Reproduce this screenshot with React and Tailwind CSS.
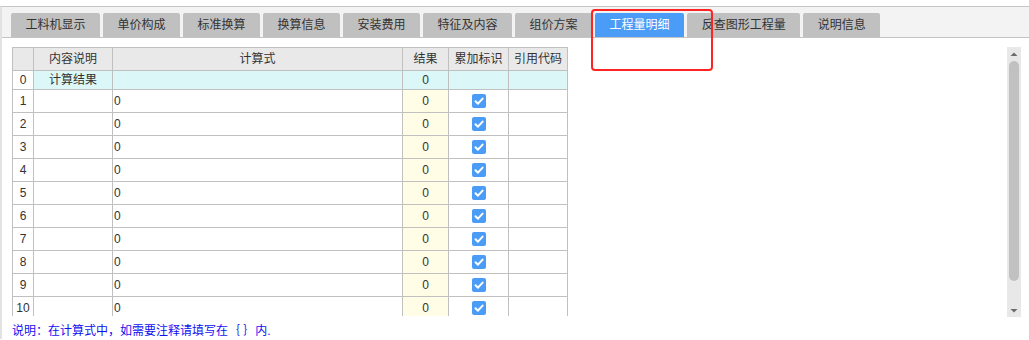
import React from "react"

const tabs = [
  "工料机显示",
  "单价构成",
  "标准换算",
  "换算信息",
  "安装费用",
  "特征及内容",
  "组价方案",
  "工程量明细",
  "反查图形工程量",
  "说明信息",
]
const activeTab = "工程量明细"

const rows = [1, 2, 3, 4, 5, 6, 7, 8, 9, 10]

function Check() {
  return (
    <span className="flex h-[14px] w-[14px] items-center justify-center rounded-[2px] bg-[#4a9cf6]">
      <svg width="14" height="14" viewBox="0 0 14 14">
        <path d="M3.5 7.2 L6 9.7 L10.6 4.6" fill="none" stroke="#fff" strokeWidth="2" strokeLinecap="round" strokeLinejoin="round" />
      </svg>
    </span>
  )
}

export default function App() {
  return (
    <div
      className="relative h-[340px] w-[1029px] overflow-hidden bg-white text-[12px] text-[#333]"
      style={{ fontFamily: '"Liberation Sans", "Noto Sans CJK SC", sans-serif' }}
    >
      <div className="h-[6px]" />
      <div className="border-t border-l-2 border-t-[#c6c6c6] border-l-[#e2e2e2]">
        {/* tab strip */}
        <div className="flex h-[31px] items-end gap-[3px] border-b border-[#c4c4c4] bg-[#f3f3f3] pl-[9px]">
          {tabs.map((t) => (
            <div
              key={t}
              className={
                t === activeTab
                  ? "flex h-[24px] items-center rounded-t-[2px] bg-[#4a9cf6] px-[14.5px] leading-none text-white"
                  : "flex h-[24px] items-center rounded-t-[2px] bg-[#c0c0c0] px-[14.5px] leading-none text-[#333]"
              }
            >
              {t}
            </div>
          ))}
        </div>

        {/* content */}
        <div className="flex items-start justify-between pt-[9px] pl-[10px] pr-[8px]">
          <div className="h-[269px] overflow-hidden border-t border-l border-[#c0c0c0]">
            {/* header */}
            <div className="flex h-[23px] bg-[#e9e9e9] leading-[22px]">
              <div className="w-[21px] border-r border-b border-[#c0c0c0]" />
              <div className="w-[79px] border-r border-b border-[#c0c0c0] text-center">内容说明</div>
              <div className="w-[290px] border-r border-b border-[#c0c0c0] text-center">计算式</div>
              <div className="w-[46px] border-r border-b border-[#c0c0c0] text-center">结果</div>
              <div className="w-[60px] border-r border-b border-[#c0c0c0] text-center">累加标识</div>
              <div className="w-[59px] border-r border-b border-[#c0c0c0] text-center">引用代码</div>
            </div>
            {/* row 0 */}
            <div className="flex h-[19px] leading-[18px]">
              <div className="w-[21px] border-r border-b border-[#c0c0c0] bg-white text-center">0</div>
              <div className="w-[79px] border-r border-b border-[#c0c0c0] bg-[#dbf7f7] text-center">计算结果</div>
              <div className="w-[290px] border-r border-b border-[#c0c0c0] bg-[#dbf7f7]" />
              <div className="w-[46px] border-r border-b border-[#c0c0c0] bg-[#dbf7f7] text-center">0</div>
              <div className="w-[60px] border-r border-b border-[#c0c0c0] bg-[#dbf7f7]" />
              <div className="w-[59px] border-r border-b border-[#c0c0c0] bg-[#dbf7f7]" />
            </div>
            {rows.map((n) => (
              <div key={n} className="flex h-[23px] leading-[22px]">
                <div className="w-[21px] border-r border-b border-[#c0c0c0] text-center">{n}</div>
                <div className="w-[79px] border-r border-b border-[#c0c0c0]" />
                <div className="w-[290px] border-r border-b border-[#c0c0c0] pl-[1px]">0</div>
                <div className="w-[46px] border-r border-b border-[#c0c0c0] bg-[#fffde6] text-center">0</div>
                <div className="flex w-[60px] items-center justify-center border-r border-b border-[#c0c0c0]">
                  <Check />
                </div>
                <div className="w-[59px] border-r border-b border-[#c0c0c0]" />
              </div>
            ))}
          </div>

          {/* scrollbar */}
          <div className="flex h-[270px] w-[14px] flex-col items-center bg-[#e8e8e8]">
            <svg width="8" height="14" viewBox="0 0 8 14" className="shrink-0">
              <path d="M0.5 9 L4 5.5 L7.5 9 Z" fill="#6b6b6b" />
            </svg>
            <div className="h-[220px] w-[10px] rounded-full bg-[#c1c1c1]" />
            <div className="flex-1" />
            <svg width="8" height="12" viewBox="0 0 8 12" className="shrink-0">
              <path d="M0.5 4 L4 7.5 L7.5 4 Z" fill="#6b6b6b" />
            </svg>
          </div>
        </div>

        <div className="mt-[6px] pl-[10px] leading-[16px] text-[#1010f0]">
          说明：在计算式中，如需要注释请填写在｛ ｝内.
        </div>
      </div>

      {/* highlight box */}
      <div className="absolute top-[9px] left-[591px] h-[62px] w-[122px] rounded-[4px] border-2 border-[#ff2424]" />
    </div>
  )
}
